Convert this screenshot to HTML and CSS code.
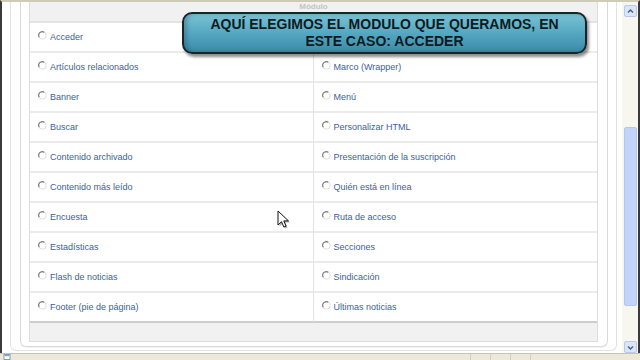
FILE: index.html
```html
<!DOCTYPE html>
<html lang="es">
<head>
<meta charset="utf-8">
<title>Módulos</title>
<link rel="stylesheet" href="styles.css">
</head>
<body>
<div class="window">
  <div class="viewport">
    <div class="page">
      <div class="outer">
        <div class="inner">
          <div class="table">
            <div class="thead">Módulo</div>
            <div class="rows">
              <div class="cell"><svg class="radio" viewBox="0 0 9 9"><circle cx="4.5" cy="4.5" r="3.7"/><path d="M1.3 6.3 A3.6 3.6 0 0 1 6.3 1.3"/></svg><span>Acceder</span></div>
              <div class="cell"><svg class="radio" viewBox="0 0 9 9"><circle cx="4.5" cy="4.5" r="3.7"/><path d="M1.3 6.3 A3.6 3.6 0 0 1 6.3 1.3"/></svg></div>
              <div class="cell"><svg class="radio" viewBox="0 0 9 9"><circle cx="4.5" cy="4.5" r="3.7"/><path d="M1.3 6.3 A3.6 3.6 0 0 1 6.3 1.3"/></svg><span>Artículos relacionados</span></div>
              <div class="cell"><svg class="radio" viewBox="0 0 9 9"><circle cx="4.5" cy="4.5" r="3.7"/><path d="M1.3 6.3 A3.6 3.6 0 0 1 6.3 1.3"/></svg><span>Marco (Wrapper)</span></div>
              <div class="cell"><svg class="radio" viewBox="0 0 9 9"><circle cx="4.5" cy="4.5" r="3.7"/><path d="M1.3 6.3 A3.6 3.6 0 0 1 6.3 1.3"/></svg><span>Banner</span></div>
              <div class="cell"><svg class="radio" viewBox="0 0 9 9"><circle cx="4.5" cy="4.5" r="3.7"/><path d="M1.3 6.3 A3.6 3.6 0 0 1 6.3 1.3"/></svg><span>Menú</span></div>
              <div class="cell"><svg class="radio" viewBox="0 0 9 9"><circle cx="4.5" cy="4.5" r="3.7"/><path d="M1.3 6.3 A3.6 3.6 0 0 1 6.3 1.3"/></svg><span>Buscar</span></div>
              <div class="cell"><svg class="radio" viewBox="0 0 9 9"><circle cx="4.5" cy="4.5" r="3.7"/><path d="M1.3 6.3 A3.6 3.6 0 0 1 6.3 1.3"/></svg><span>Personalizar HTML</span></div>
              <div class="cell"><svg class="radio" viewBox="0 0 9 9"><circle cx="4.5" cy="4.5" r="3.7"/><path d="M1.3 6.3 A3.6 3.6 0 0 1 6.3 1.3"/></svg><span>Contenido archivado</span></div>
              <div class="cell"><svg class="radio" viewBox="0 0 9 9"><circle cx="4.5" cy="4.5" r="3.7"/><path d="M1.3 6.3 A3.6 3.6 0 0 1 6.3 1.3"/></svg><span>Presentación de la suscripción</span></div>
              <div class="cell"><svg class="radio" viewBox="0 0 9 9"><circle cx="4.5" cy="4.5" r="3.7"/><path d="M1.3 6.3 A3.6 3.6 0 0 1 6.3 1.3"/></svg><span>Contenido más leído</span></div>
              <div class="cell"><svg class="radio" viewBox="0 0 9 9"><circle cx="4.5" cy="4.5" r="3.7"/><path d="M1.3 6.3 A3.6 3.6 0 0 1 6.3 1.3"/></svg><span>Quién está en línea</span></div>
              <div class="cell"><svg class="radio" viewBox="0 0 9 9"><circle cx="4.5" cy="4.5" r="3.7"/><path d="M1.3 6.3 A3.6 3.6 0 0 1 6.3 1.3"/></svg><span>Encuesta</span></div>
              <div class="cell"><svg class="radio" viewBox="0 0 9 9"><circle cx="4.5" cy="4.5" r="3.7"/><path d="M1.3 6.3 A3.6 3.6 0 0 1 6.3 1.3"/></svg><span>Ruta de acceso</span></div>
              <div class="cell"><svg class="radio" viewBox="0 0 9 9"><circle cx="4.5" cy="4.5" r="3.7"/><path d="M1.3 6.3 A3.6 3.6 0 0 1 6.3 1.3"/></svg><span>Estadísticas</span></div>
              <div class="cell"><svg class="radio" viewBox="0 0 9 9"><circle cx="4.5" cy="4.5" r="3.7"/><path d="M1.3 6.3 A3.6 3.6 0 0 1 6.3 1.3"/></svg><span>Secciones</span></div>
              <div class="cell"><svg class="radio" viewBox="0 0 9 9"><circle cx="4.5" cy="4.5" r="3.7"/><path d="M1.3 6.3 A3.6 3.6 0 0 1 6.3 1.3"/></svg><span>Flash de noticias</span></div>
              <div class="cell"><svg class="radio" viewBox="0 0 9 9"><circle cx="4.5" cy="4.5" r="3.7"/><path d="M1.3 6.3 A3.6 3.6 0 0 1 6.3 1.3"/></svg><span>Sindicación</span></div>
              <div class="cell last"><svg class="radio" viewBox="0 0 9 9"><circle cx="4.5" cy="4.5" r="3.7"/><path d="M1.3 6.3 A3.6 3.6 0 0 1 6.3 1.3"/></svg><span>Footer (pie de página)</span></div>
              <div class="cell last"><svg class="radio" viewBox="0 0 9 9"><circle cx="4.5" cy="4.5" r="3.7"/><path d="M1.3 6.3 A3.6 3.6 0 0 1 6.3 1.3"/></svg><span>Últimas noticias</span></div>
            </div>
            <div class="tfoot"></div>
          </div>
        </div>
      </div>
      <div class="callout">AQUÍ ELEGIMOS EL MODULO QUE QUERAMOS, EN<br>ESTE CASO: ACCEDER</div>
      <svg class="cursor" viewBox="0 0 14 20"><path class="shadow" d="M2.5 2.5 L2.5 16.5 L6 13.2 L8.4 18.6 L10.6 17.6 L8.3 12.4 L13 12.4 Z"/><path class="arrow" d="M1 1 L1 15 L4.5 11.7 L6.9 17.1 L9.1 16.1 L6.8 10.9 L11.5 10.9 Z"/></svg>
    </div>
    <div class="scrollbar">
      <div class="sbtn"><svg viewBox="0 0 11 11"><path d="M3 6.5 L5.5 4 L8 6.5"/></svg></div>
      <div class="track">
        <div class="thumb"></div>
      </div>
      <div class="sbtn"><svg viewBox="0 0 11 11"><path d="M3 4.5 L5.5 7 L8 4.5"/></svg></div>
    </div>
  </div>
  <div class="status">
    <svg class="sicon" viewBox="0 0 8 7"><rect x="0.5" y="0.5" width="7" height="6" fill="#fff" stroke="#6f8fb8"/><rect x="1.5" y="1.5" width="5" height="1" fill="#4d78b3"/></svg>
    <div class="sfill"></div>
    <div class="seg"></div>
    <div class="seg"></div>
    <div class="seg"></div>
    <div class="seg wide"></div>
  </div>
</div>
</body>
</html>
```
FILE: styles.css
```css
* { box-sizing: border-box; }
html, body { margin: 0; padding: 0; }
body { width: 640px; height: 360px; overflow: hidden; background: #fff; font-family: "Liberation Sans", Arial, sans-serif; }

.window { width: 640px; height: 360px; display: flex; flex-direction: column; }

.viewport {
  height: 353px;
  display: flex;
  border-left: 2px solid #3a3a3a;
  border-right: 2px solid #3a3a3a;
  border-top: 2px solid #cfcbb9;
}

.page {
  position: relative;
  flex: 1;
  padding: 0 5px 0 8px;
  overflow: hidden;
  background: #fff;
}

.outer {
  height: 349px;
  border: 1px solid #e2e2e2;
  border-top: none;
  border-radius: 0 0 6px 6px;
  padding: 0 8px 0 9px;
}

.inner {
  height: 345px;
  border: 1px solid #d9d9d9;
  border-top: none;
  border-radius: 0 0 6px 6px;
  padding: 0 9px 0 8px;
  box-shadow: 0 1px 0 #f4f4f4;
}

.table {
  border: 1px solid #dcdcdc;
  border-top: none;
}

.thead {
  height: 21px;
  background: #f1f1f1;
  border-bottom: 2px solid #e3e3e3;
  text-align: center;
  font-size: 8px;
  font-weight: bold;
  color: #c4c4c4;
  line-height: 9px;
}

.rows {
  display: grid;
  grid-template-columns: 1fr 1fr;
}

.cell {
  height: 30px;
  display: flex;
  align-items: center;
  padding-left: 8px;
  border-bottom: 2px solid #ebebeb;
  font-size: 9px;
  color: #3b5ea6;
}
.cell:nth-child(odd) { border-right: 1px solid #e2e2e2; }
.cell.last { border-bottom: 2px solid #cdcdcd; }

.radio {
  width: 9px;
  height: 9px;
  margin: 0 3px 3px 0;
  flex: none;
}
.radio circle { fill: #fff; stroke: #d6d6d6; stroke-width: 0.8; }
.radio path { fill: none; stroke: #7c7c7c; stroke-width: 1.1; }

.tfoot {
  height: 18px;
  background: #f1f1f1;
}

.callout {
  position: absolute;
  left: 180px;
  top: 10px;
  width: 405px;
  height: 42px;
  border: 2px solid #17252b;
  border-radius: 10px;
  background: linear-gradient(180deg, #7cc2d5 0%, #5fb0c7 35%, #4a9cb8 70%, #3c8ba8 100%);
  box-shadow: 2px 3px 3px rgba(0, 0, 0, 0.45), inset 3px 0 4px rgba(0, 40, 60, 0.25);
  padding-top: 2px;
  text-align: center;
  font-family: "Liberation Sans", Arial, sans-serif;
  font-weight: bold;
  font-size: 14px;
  line-height: 17px;
  color: #0e1b21;
}

.cursor {
  position: absolute;
  left: 275px;
  top: 208px;
  width: 14px;
  height: 20px;
}
.cursor .shadow { fill: rgba(0, 0, 0, 0.3); }
.cursor .arrow { fill: #fff; stroke: #111; stroke-width: 1; stroke-linejoin: round; }

.scrollbar {
  width: 16px;
  display: flex;
  flex-direction: column;
  background: #f7f6ef;
  padding: 3px 1px 0 2px;
}

.sbtn {
  height: 12px;
  border: 1px solid #b9c9ea;
  border-radius: 2px;
  background: #dbe5f8;
  display: flex;
  align-items: center;
  justify-content: center;
}
.sbtn svg { width: 11px; height: 11px; }
.sbtn path { fill: none; stroke: #4d6185; stroke-width: 1.5; }

.track {
  flex: 1;
  padding: 110px 0 35px;
  display: flex;
}
.thumb {
  flex: 1;
  background: #c2d4f9;
  border: 1px solid #b3c7f1;
  border-radius: 2px;
}

.status {
  flex: 1;
  display: flex;
  align-items: center;
  background: #ece9d8;
  border-top: 1px solid #c8c4ae;
  padding-left: 3px;
}
.sicon { width: 8px; height: 6px; }
.sfill { flex: 1; }
.seg { width: 20px; height: 100%; border-left: 1px solid #d2cfbe; }
.seg.wide { width: 110px; }
```
